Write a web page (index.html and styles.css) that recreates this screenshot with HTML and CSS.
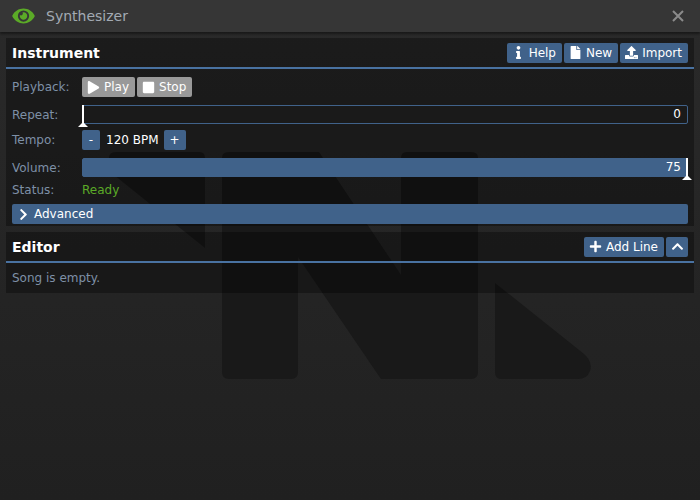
FILE: index.html
```html
<!DOCTYPE html>
<html lang="en">
<head>
<meta charset="utf-8">
<title>Synthesizer</title>
<link rel="stylesheet" href="styles.css">
</head>
<body>
<svg class="logo" viewBox="109 152 482 227" aria-hidden="true">
  <path d="M116 152H199Q205 152 205 158V248L109 171V158Q109 152 116 152Z"/>
  <path d="M229 152H319L401 275V158Q401 152 407 152H471Q478 152 478 158V372Q478 379 471 379H381L298 257V372Q298 379 291 379H229Q222 379 222 372V158Q222 152 229 152Z"/>
  <path d="M495 283L584 354Q593 362 590 371Q587 379 578 379H501Q495 379 495 372Z"/>
</svg>
<header class="titlebar">
  <svg class="eye" viewBox="0 0 576 512"><path d="M572.52 241.4C518.29 135.59 410.93 64 288 64S57.68 135.64 3.48 241.41a32.35 32.35 0 0 0 0 29.19C57.71 376.41 165.07 448 288 448s230.32-71.64 284.52-177.41a32.35 32.35 0 0 0 0-29.19zM288 400a144 144 0 1 1 144-144 143.93 143.93 0 0 1-144 144zm0-240a95.31 95.31 0 0 0-25.31 3.79 47.85 47.85 0 0 1-66.9 66.9A95.78 95.78 0 1 0 288 160z"/></svg>
  <span class="window-title">Synthesizer</span>
  <svg class="close" viewBox="0 0 12 12"><path d="M1 1L11 11M11 1L1 11"/></svg>
</header>
<main class="content">
  <section class="section">
    <div class="section-head">
      <h2>Instrument</h2>
      <div class="buttons">
        <button class="btn"><svg class="ic" viewBox="0 0 192 512"><path d="M20 424.229h20V279.771H20c-11.046 0-20-8.954-20-20V212c0-11.046 8.954-20 20-20h112c11.046 0 20 8.954 20 20v212.229h20c11.046 0 20 8.954 20 20V492c0 11.046-8.954 20-20 20H20c-11.046 0-20-8.954-20-20v-47.771c0-11.046 8.954-20 20-20zM96 0C56.235 0 24 32.235 24 72s32.235 72 72 72 72-32.235 72-72S135.764 0 96 0z"/></svg>Help</button>
        <button class="btn"><svg class="ic" viewBox="0 0 384 512"><path d="M224 136V0H24C10.7 0 0 10.7 0 24v464c0 13.3 10.7 24 24 24h336c13.3 0 24-10.7 24-24V160H248c-13.2 0-24-10.8-24-24zm160-14.1v6.1H256V0h6.1c6.4 0 12.5 2.5 17 7l97.9 98c4.5 4.5 7 10.6 7 16.9z"/></svg>New</button>
        <button class="btn"><svg class="ic" viewBox="0 0 512 512"><path d="M296 384h-80c-13.3 0-24-10.7-24-24V192h-87.7c-17.8 0-26.7-21.5-14.1-34.1L242.3 5.7c7.5-7.5 19.8-7.5 27.3 0l152.2 152.2c12.6 12.6 3.7 34.1-14.1 34.1H320v168c0 13.3-10.7 24-24 24zm216-8v112c0 13.3-10.7 24-24 24H24c-13.3 0-24-10.7-24-24V376c0-13.3 10.7-24 24-24h136v8c0 30.9 25.1 56 56 56h80c30.9 0 56-25.1 56-56v-8h136c13.3 0 24 10.7 24 24zm-124 88c0-11-9-20-20-20s-20 9-20 20 9 20 20 20 20-9 20-20zm64 0c0-11-9-20-20-20s-20 9-20 20 9 20 20 20 20-9 20-20z"/></svg>Import</button>
      </div>
    </div>
    <div class="section-body">
      <div class="fields">
        <span class="label">Playback:</span>
        <div class="inline">
          <button class="btn grey"><svg class="ic" viewBox="0 0 448 512"><path d="M424.4 214.7L72.4 6.6C43.8-10.3 0 6.1 0 47.9V464c0 37.5 40.7 60.1 72.4 41.3l352-208c31.4-18.5 31.5-64.1 0-82.6z"/></svg>Play</button>
          <button class="btn grey"><svg class="ic" viewBox="0 0 448 512"><path d="M400 32H48C21.5 32 0 53.5 0 80v352c0 26.5 21.5 48 48 48h352c26.5 0 48-21.5 48-48V80c0-26.5-21.5-48-48-48z"/></svg>Stop</button>
        </div>
        <span class="label">Repeat:</span>
        <div class="slider">
          <span class="slider-value">0</span>
          <span class="pointer at-start"></span>
        </div>
        <span class="label">Tempo:</span>
        <div class="inline tempo">
          <button class="btn step">-</button>
          <span class="bpm">120 BPM</span>
          <button class="btn step">+</button>
        </div>
        <span class="label">Volume:</span>
        <div class="slider filled">
          <span class="slider-value">75</span>
          <span class="pointer at-end"></span>
        </div>
        <span class="label">Status:</span>
        <span class="ready">Ready</span>
      </div>
      <button class="btn collapsible"><svg class="ic" viewBox="0 0 320 512"><path d="M285.476 272.971L91.132 467.314c-9.373 9.373-24.569 9.373-33.941 0l-22.667-22.667c-9.357-9.357-9.375-24.522-.04-33.901L188.505 256 34.484 101.255c-9.335-9.379-9.317-24.544.04-33.901l22.667-22.667c9.373-9.373 24.569-9.373 33.941 0L285.475 239.03c9.373 9.372 9.373 24.568.001 33.941z"/></svg>Advanced</button>
    </div>
  </section>
  <section class="section">
    <div class="section-head">
      <h2>Editor</h2>
      <div class="buttons">
        <button class="btn"><svg class="ic" viewBox="0 0 448 512"><path d="M416 208H272V64c0-17.67-14.33-32-32-32h-32c-17.67 0-32 14.33-32 32v144H32c-17.67 0-32 14.33-32 32v32c0 17.67 14.33 32 32 32h144v144c0 17.67 14.33 32 32 32h32c17.67 0 32-14.33 32-32V304h144c17.67 0 32-14.33 32-32v-32c0-17.67-14.33-32-32-32z"/></svg>Add Line</button>
        <button class="btn only-icon"><svg class="ic" viewBox="0 0 448 512"><path d="M240.971 130.524l194.343 194.343c9.373 9.373 9.373 24.569 0 33.941l-22.667 22.667c-9.357 9.357-24.522 9.375-33.901.04L224 227.495 69.255 381.516c-9.379 9.335-24.544 9.317-33.901-.04l-22.667-22.667c-9.373-9.373-9.373-24.569 0-33.941L207.03 130.525c9.372-9.373 24.568-9.373 33.941-.001z"/></svg></button>
      </div>
    </div>
    <div class="section-body empty">Song is empty.</div>
  </section>
</main>
</body>
</html>
```
FILE: styles.css
```css
* { box-sizing: border-box; }
html, body { height: 100%; }
body {
  margin: 0;
  height: 500px;
  overflow: hidden;
  position: relative;
  font: 12px/14px "DejaVu Sans", Verdana, sans-serif;
  color: #fff;
  background: linear-gradient(to bottom, #2a2a2a, #202020);
}
.logo {
  position: absolute;
  left: 109px;
  top: 152px;
  width: 482px;
  height: 227px;
  fill: #191919;
}
.titlebar {
  position: relative;
  height: 32px;
  display: flex;
  align-items: center;
  background: #363636;
  box-shadow: 0 2px 2px rgba(0, 0, 0, .4);
}
.eye { width: 23px; height: 20px; margin-left: 12px; fill: #5baa27; }
.window-title { margin-left: 11px; font-size: 14px; color: #a3aab3; }
.close { width: 12px; height: 12px; margin-left: auto; margin-right: 16px; fill: none; stroke: #8b8b8b; stroke-width: 2; }
.content { position: relative; padding: 6px; display: flex; flex-direction: column; gap: 6px; }
.section { background: rgba(0, 0, 0, .33); }
.section-head {
  height: 31px;
  padding: 0 6px;
  display: flex;
  align-items: center;
  justify-content: space-between;
  border-bottom: 2px solid #4972a1;
}
.section-head h2 { margin: 0; font-size: 14px; line-height: 16px; font-weight: bold; }
.buttons { display: flex; gap: 2px; }
.btn {
  display: inline-flex;
  align-items: center;
  height: 20px;
  padding: 0 6px 0 4px;
  border: 0;
  border-radius: 2px;
  background: #40628a;
  color: #fff;
  font: inherit;
}
.ic { width: 15px; height: 13px; margin: 0 3px 0 0; fill: #fff; flex: none; }
.grey { background: #999; }
.section-body { padding: 8px 6px 2px; }
.fields {
  display: grid;
  grid-template-columns: 70px 1fr;
  grid-template-rows: 28px 25px 28px 22px 17px;
  align-items: start;
}
.label, .ready { padding-top: 3px; }
.label { color: #7e90a7; }
.inline { display: flex; align-items: center; gap: 2px; }
.slider {
  position: relative;
  height: 19px;
  line-height: 17px;
  border: 1px solid #40628a;
  border-radius: 2px;
  text-align: right;
  padding-right: 6px;
}
.filled { background: #40628a; }
.pointer { position: absolute; bottom: -4px; width: 2px; height: 22px; background: #fff; }
.pointer::after {
  content: "";
  position: absolute;
  left: -4px;
  bottom: 0;
  border: 5px solid transparent;
  border-top: 0;
  border-bottom-color: #fff;
}
.at-start { left: -1px; }
.at-end { right: -1px; }
.step { min-width: 18px; justify-content: center; padding: 0 6px; }
.bpm { margin: 0 3px 0 4px; }
.ready { color: #5baa27; }
.collapsible { width: 100%; margin-top: 7px; }
.only-icon { width: 22px; padding: 0; justify-content: center; }
.only-icon .ic { margin: 0; }
.empty { color: #7e90a7; padding: 8px 6px; }
```
